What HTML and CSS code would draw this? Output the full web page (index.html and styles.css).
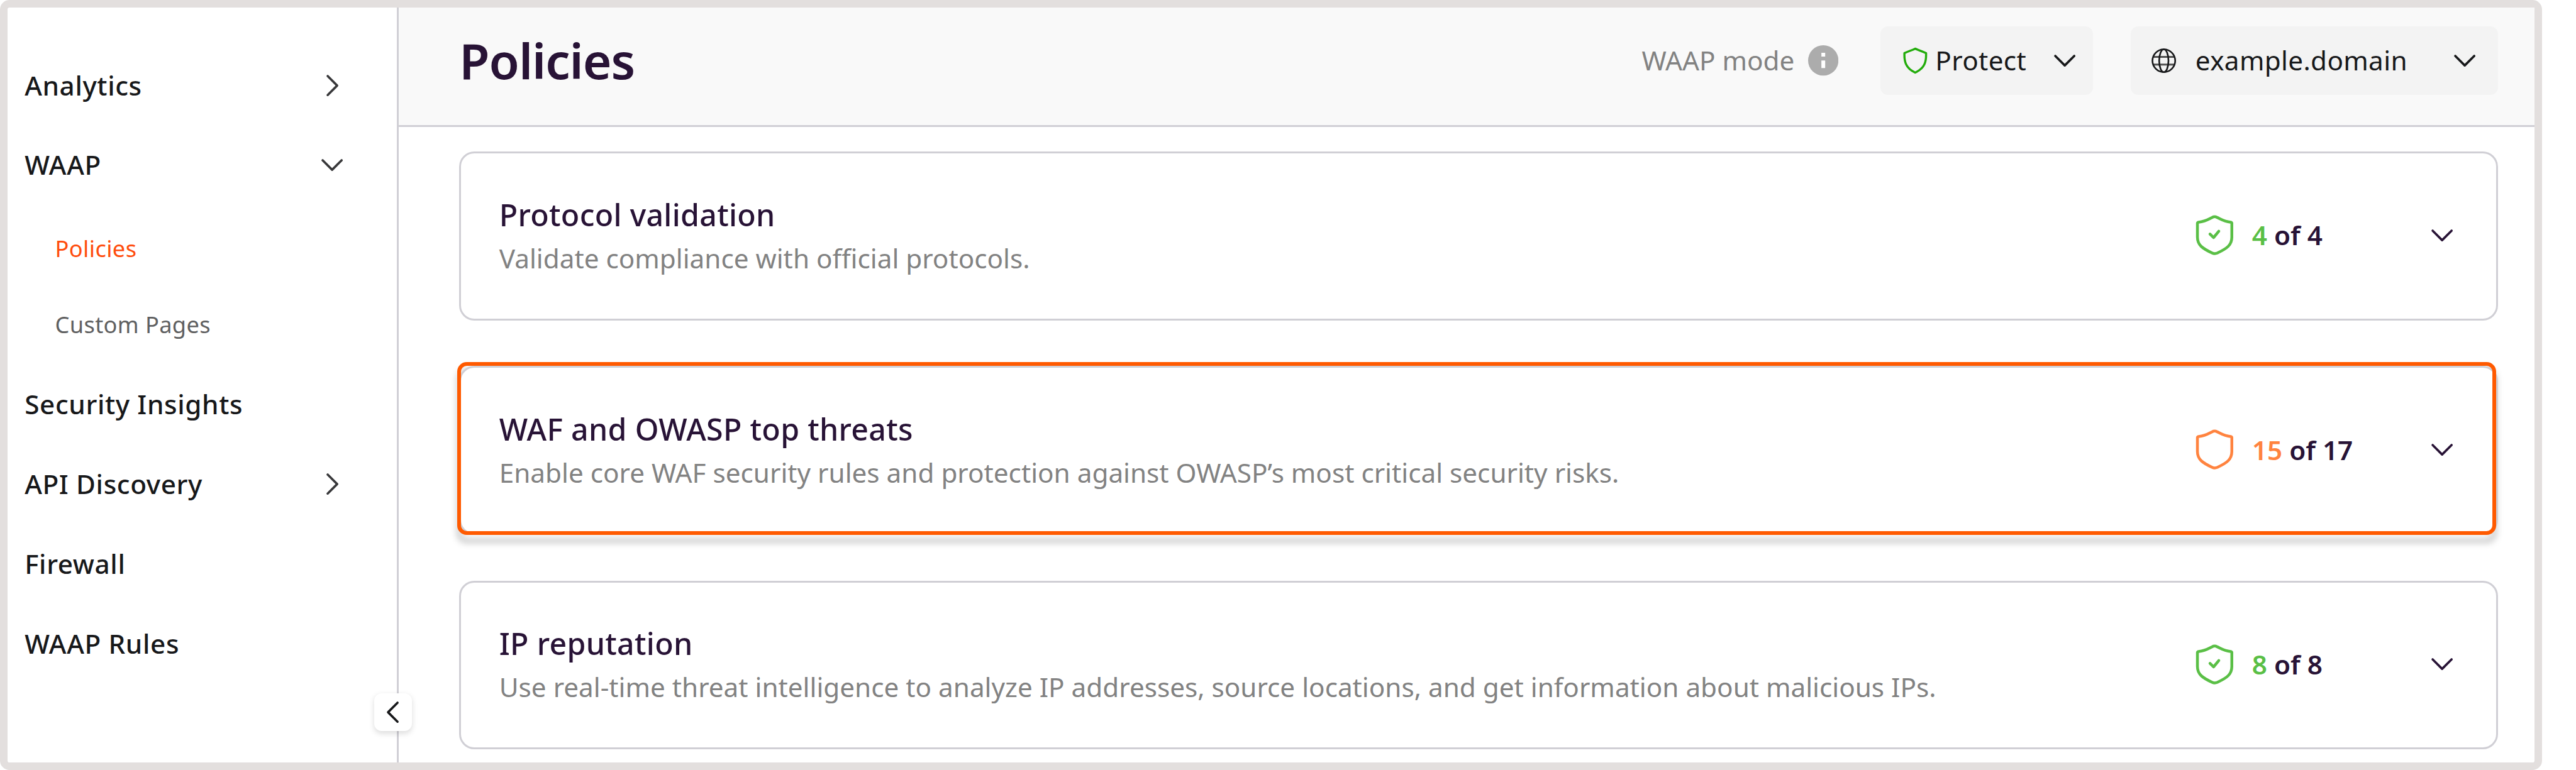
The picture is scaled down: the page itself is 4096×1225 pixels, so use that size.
FILE: index.html
```html
<!DOCTYPE html>
<html lang="en">
<head>
<meta charset="utf-8">
<title>Policies</title>
<link rel="stylesheet" href="styles.css">
</head>
<body>
<svg class="defs" aria-hidden="true">
  <symbol id="chev-down" viewBox="0 0 48 28"><path d="M4 4 L24 24 L44 4"/></symbol>
  <symbol id="chev-right" viewBox="0 0 28 48"><path d="M4 4 L24 24 L4 44"/></symbol>
  <symbol id="chev-left" viewBox="0 0 28 48"><path d="M24 4 L4 24 L24 44"/></symbol>
  <symbol id="shield" viewBox="18 51 96 96"><path d="M30 74Q30 72 32.5 71.5C46 70 53 65.500 61 61.500Q66.300 58.500 71.500 61.500C80 65.500 86 70 100 71.500Q102.500 72 102.500 74V103C102.500 120 92 127 72 136.500Q66.300 139 61 136.500C41 127 30 120 30 103Z"/></symbol>
  <symbol id="shield-check" viewBox="18 51 96 96"><path d="M30 74Q30 72 32.5 71.5C46 70 53 65.500 61 61.500Q66.300 58.500 71.500 61.500C80 65.500 86 70 100 71.500Q102.500 72 102.500 74V103C102.500 120 92 127 72 136.500Q66.300 139 61 136.500C41 127 30 120 30 103Z"/><path d="M56.500 96.500L64 104L75 90.500"/></symbol>
</svg>
<div class="window">
  <nav class="sidebar">
    <a class="item">Analytics<svg class="chev-r"><use href="#chev-right"/></svg></a>
    <a class="item">WAAP<svg class="chev-d"><use href="#chev-down"/></svg></a>
    <div class="sub">
      <a class="subitem active">Policies</a>
      <a class="subitem">Custom Pages</a>
    </div>
    <a class="item">Security Insights</a>
    <a class="item">API Discovery<svg class="chev-r"><use href="#chev-right"/></svg></a>
    <a class="item">Firewall</a>
    <a class="item">WAAP Rules</a>
    <button class="collapse"><svg class="chev-r"><use href="#chev-left"/></svg></button>
  </nav>
  <main class="main">
    <header class="header">
      <h1>Policies</h1>
      <div class="mode">
        <span>WAAP mode</span>
        <svg class="info" viewBox="0 0 64 64"><circle cx="32" cy="32" r="32"/><path d="M28 16h8v8h-8zM28 32h8v16h-8z"/></svg>
      </div>
      <div class="select protect">
        <svg class="mini-shield" viewBox="20 18 54 60"><path d="M46.8 22.500C54 26 62 28 69.800 32C70.500 50 67 64 46.800 73C27 64 23.500 50 24.200 32C32 28 40 26 46.800 22.500Z"/></svg>
        <span>Protect</span>
        <svg class="chev-d"><use href="#chev-down"/></svg>
      </div>
      <div class="select domain">
        <svg class="globe" viewBox="0 0 52 52"><path class="lat" d="M3 18H49M3 34H49"/><circle cx="26" cy="26" r="24"/><ellipse cx="26" cy="26" rx="9.800" ry="24"/></svg>
        <span>example.domain</span>
        <svg class="chev-d"><use href="#chev-down"/></svg>
      </div>
    </header>
    <section class="list">
      <article class="card">
        <div class="text"><h2>Protocol validation</h2><p>Validate compliance with official protocols.</p></div>
        <svg class="shield ok"><use href="#shield-check"/></svg>
        <div class="count"><b class="ok">4</b> of 4</div>
        <svg class="chev-d"><use href="#chev-down"/></svg>
      </article>
      <div class="focus">
        <article class="card">
          <div class="text"><h2>WAF and OWASP top threats</h2><p>Enable core WAF security rules and protection against OWASP’s most critical security risks.</p></div>
          <svg class="shield warn"><use href="#shield"/></svg>
          <div class="count"><b class="warn">15</b> of 17</div>
          <svg class="chev-d"><use href="#chev-down"/></svg>
        </article>
      </div>
      <article class="card">
        <div class="text"><h2>IP reputation</h2><p>Use real-time threat intelligence to analyze IP addresses, source locations, and get information about malicious IPs.</p></div>
        <svg class="shield ok"><use href="#shield-check"/></svg>
        <div class="count"><b class="ok">8</b> of 8</div>
        <svg class="chev-d"><use href="#chev-down"/></svg>
      </article>
    </section>
  </main>
</div>
</body>
</html>
```
FILE: styles.css
```css
/* 1rem = 10 design pixels */
html { font-size: 30.1842px; }
* { box-sizing: border-box; margin: 0; padding: 0; }
body {
  height: 100vh;
  overflow: hidden;
  background: #fff;
  font: 400 1.4rem/2.2rem "Noto Sans", sans-serif;
  color: #17181a;
}
svg { display: block; flex: none; fill: none; stroke: currentColor; stroke-linecap: round; stroke-linejoin: round; }
.defs { position: absolute; width: 0; height: 0; }
.chev-d { width: 1.2rem; height: .7rem; stroke-width: 4.800; }
.chev-r { width: .7rem; height: 1.2rem; stroke-width: 4.800; }

.window {
  display: flex;
  width: 133.9rem;
  height: 100vh;
  border: .4rem solid #e3dfde;
  border-radius: .5rem;
}

/* sidebar */
.sidebar {
  position: relative;
  width: 20.6rem;
  padding-top: 2rem;
  border-right: .1rem solid #d0cfd5;
}
.item {
  display: flex;
  align-items: center;
  justify-content: space-between;
  height: 4.2rem;
  padding: 0 2.8rem 0 .9rem;
  font-weight: 500;
  letter-spacing: .021rem;
}
.item svg { color: #38383a; }
.item .chev-r { margin-right: .25rem; }
.sub { padding: .29rem 0 .13rem 2.5rem; }
.subitem {
  display: flex;
  align-items: center;
  height: 4rem;
  font-size: 1.2rem;
  letter-spacing: .012rem;
  color: #5f6061;
}
.subitem.active { color: #ff4c0c; }
.collapse {
  position: absolute;
  left: 19.3rem;
  bottom: 1.65rem;
  display: flex;
  align-items: center;
  justify-content: center;
  width: 2rem;
  height: 2rem;
  border: 0;
  border-radius: .4rem;
  background: #fff;
  color: #17181a;
  box-shadow: 0 .1rem .3rem rgba(0, 0, 0, .14);
}

/* header */
.main { flex: 1; min-width: 0; }
.header {
  display: flex;
  align-items: center;
  height: 6.3rem;
  padding: 0 1.9rem .6rem 3.2rem;
  border-bottom: .1rem solid #d0cfd5;
  background: #f9f9f9;
}
h1 { margin-right: auto; font-size: 2.6rem; line-height: 3.6rem; font-weight: 600; letter-spacing: -.035rem; color: #281336; }
.mode { display: flex; align-items: center; gap: .72rem; margin-right: 2.2rem; color: #828282; }
.info { width: 1.6rem; height: 1.6rem; fill: #acacac; stroke: none; }
.info path { fill: #fff; }
.select { display: flex; align-items: center; height: 3.6rem; border-radius: .4rem; background: #f3f3f3; letter-spacing: .011rem; }
.select .chev-d { margin-left: auto; }
.protect { width: 11.2rem; margin-right: 2rem; padding: 0 .875rem 0 1.15rem; }
.mini-shield { width: 1.35rem; height: 1.5rem; margin-right: .4rem; color: #22ac0b; stroke-width: 4.500; }
.domain { width: 19.35rem; padding: 0 1.15rem 0 1.1rem; }
.globe { width: 1.3rem; height: 1.3rem; margin-right: 1rem; stroke-width: 3.500; }
.globe .lat { stroke-width: 4; stroke: #505050; stroke-linecap: butt; }

/* policy cards */
.list { display: flex; flex-direction: column; gap: 2.4rem; padding: 1.3rem 1.9rem 0 3.2rem; }
.card {
  position: relative;
  display: flex;
  align-items: center;
  height: 8.9rem;
  padding: 0 2.25rem .07rem 2rem;
  border: .1rem solid #d0cfd5;
  border-radius: .8rem;
  background: #fff;
  color: #281336;
}
.text { flex: 1; }
h2 { font-size: 1.6rem; line-height: 2.4rem; font-weight: 500; letter-spacing: .01rem; }
p { padding-top: .03rem; color: #828282; }
.shield { width: 2.4rem; height: 2.4rem; stroke-width: 6; }
.count { width: 9.42rem; margin-left: .78rem; font-weight: 600; }
.count b { font-weight: 600; }
.ok { color: #5abf46; }
.warn { color: #ff833f; }

/* highlighted card: ring sits slightly up and left of the card */
.focus { position: relative; }
.focus::before, .focus::after {
  content: "";
  position: absolute;
  inset: -.2rem .1rem 0 -.1rem;
  border: .2rem solid #ff5a00;
  border-radius: .5rem;
}
.focus::before {
  border-color: rgba(0, 0, 0, .28);
  transform: translateY(.4rem);
  filter: blur(.18rem);
}
```
